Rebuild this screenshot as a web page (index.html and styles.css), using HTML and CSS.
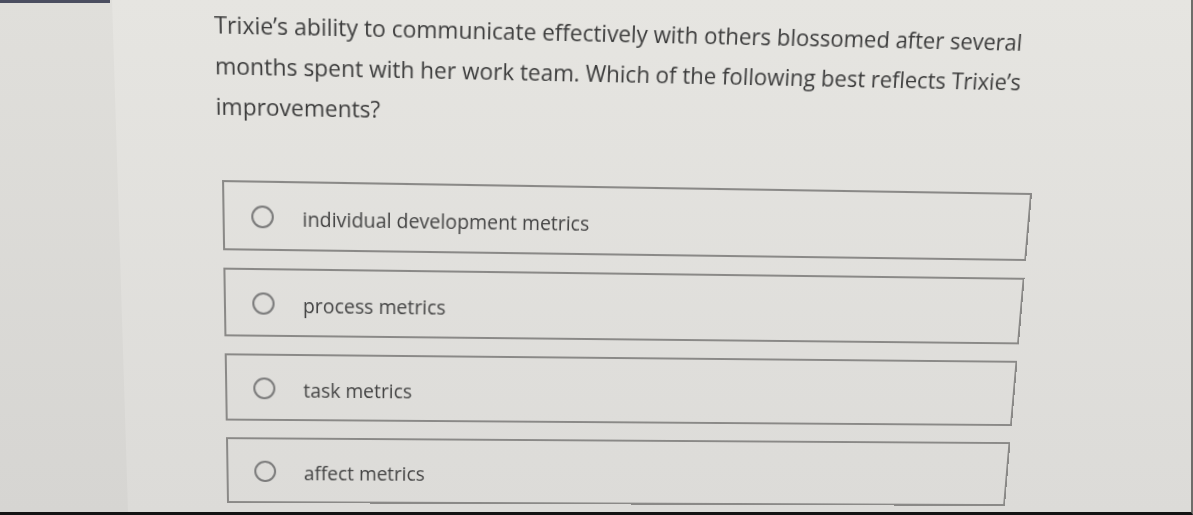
FILE: index.html
```html
<!DOCTYPE html>
<html lang="en">
<head>
<meta charset="utf-8">
<title>Question</title>
<link rel="stylesheet" href="styles.css">
</head>
<body>
<div class="page">
  <aside class="sidebar"><div class="topbar"></div></aside>
  <main class="main">
    <div class="sheet">
      <p class="question">Trixie’s ability to communicate effectively with others blossomed after several months spent with her work team. Which of the following best reflects Trixie’s improvements?</p>
      <ul class="options">
        <li class="option"><span class="radio"></span><span class="label">individual development metrics</span></li>
        <li class="option"><span class="radio"></span><span class="label">process metrics</span></li>
        <li class="option"><span class="radio"></span><span class="label">task metrics</span></li>
        <li class="option"><span class="radio"></span><span class="label">affect metrics</span></li>
      </ul>
    </div>
  </main>
</div>
</body>
</html>
```
FILE: styles.css
```css
html, body {
  margin: 0;
  height: 515px;
  overflow: hidden;
}
body {
  font-family: "Open Sans", "Noto Sans", sans-serif;
  background: #e2e1dd;
}
.page {
  display: flex;
  height: 515px;
  box-sizing: border-box;
  border-bottom: 3px solid #141414;
  border-right: 2px solid #6e6d6a;
  background: linear-gradient(to bottom, #e6e5e1, #dcdbd8);
  overflow: hidden;
}
.sidebar {
  flex: none;
  width: 128px;
  background: linear-gradient(to bottom, #e0dfdb, #d6d5d2);
  clip-path: polygon(0 0, 112px 0, 128px 100%, 0 100%);
}
.topbar {
  width: 110px;
  height: 3px;
  background: #4b4e60;
}
.main {
  flex: 1;
  min-width: 0;
}
.sheet {
  width: 810px;
  margin-left: 94px;
  padding-top: 14px;
  transform-origin: 0 180px;
  transform: matrix3d(1.031644, 0.016557, 0, 0.00003907, 0.016184, 1.042229, 0, 0.00013115, 0, 0, 1, 0, 0, 0, 0, 1);
}
.question {
  margin: 0 0 0 -5px;
  font-size: 22px;
  line-height: 38px;
  color: #3c3c3c;
}
.options {
  list-style: none;
  margin: 52px 0 0;
  padding: 0;
  display: flex;
  flex-direction: column;
  gap: 17px;
}
.option {
  height: 68px;
  box-sizing: border-box;
  border: 2px solid #8a8987;
  display: flex;
  align-items: flex-start;
  padding: 22px 0 0 26px;
  gap: 28px;
}
.radio {
  flex: none;
  width: 22px;
  height: 22px;
  box-sizing: border-box;
  border: 2px solid #7b7b7b;
  border-radius: 50%;
}
.label {
  font-size: 19.4px;
  line-height: 26px;
  color: #434343;
}
```
